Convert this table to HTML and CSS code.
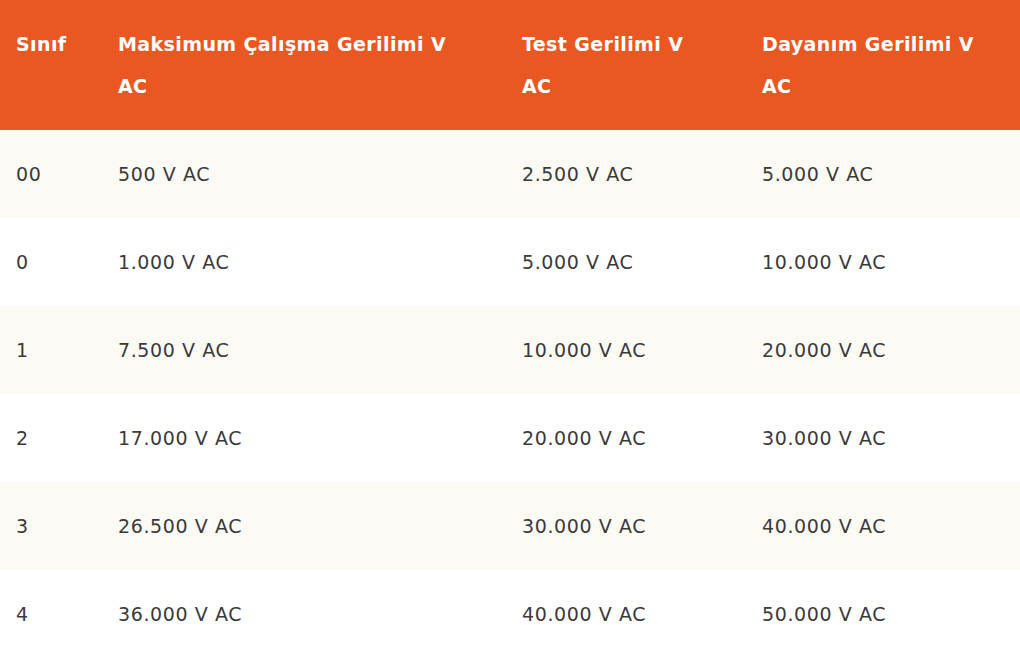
FILE: index.html
```html
<!DOCTYPE html>
<html lang="tr">
<head>
<meta charset="utf-8">
<title>Sınıf tablosu</title>
<link rel="stylesheet" href="styles.css">
</head>
<body>
<table class="volt-table">
  <colgroup>
    <col class="c1"><col class="c2"><col class="c3"><col class="c4">
  </colgroup>
  <thead>
    <tr>
      <th>Sınıf</th>
      <th>Maksimum Çalışma Gerilimi V AC</th>
      <th>Test Gerilimi V AC</th>
      <th>Dayanım Gerilimi V AC</th>
    </tr>
  </thead>
  <tbody>
    <tr><td>00</td><td>500 V AC</td><td>2.500 V AC</td><td>5.000 V AC</td></tr>
    <tr><td>0</td><td>1.000 V AC</td><td>5.000 V AC</td><td>10.000 V AC</td></tr>
    <tr><td>1</td><td>7.500 V AC</td><td>10.000 V AC</td><td>20.000 V AC</td></tr>
    <tr><td>2</td><td>17.000 V AC</td><td>20.000 V AC</td><td>30.000 V AC</td></tr>
    <tr><td>3</td><td>26.500 V AC</td><td>30.000 V AC</td><td>40.000 V AC</td></tr>
    <tr><td>4</td><td>36.000 V AC</td><td>40.000 V AC</td><td>50.000 V AC</td></tr>
  </tbody>
</table>
</body>
</html>
```

FILE: styles.css
```css
html, body {
  margin: 0;
  padding: 0;
  background: #ffffff;
}

body {
  font-family: "DejaVu Sans", "Noto Sans", sans-serif;
  color: #3a3a3a;
}

.volt-table {
  width: 1020px;
  border-collapse: collapse;
  table-layout: fixed;
}

.c1 { width: 102px; }
.c2 { width: 404px; }
.c3 { width: 240px; }
.c4 { width: 274px; }

.volt-table th,
.volt-table td {
  padding: 23px 16px;
  line-height: 42px;
  font-size: 19px;
  text-align: left;
  vertical-align: top;
}

.volt-table thead tr {
  background: #e95822;
}

.volt-table th {
  padding-right: 38px;
  color: #ffffff;
  font-weight: 700;
  letter-spacing: 0.4px;
}

.volt-table tbody tr:nth-child(odd) {
  background: #fbfaf5;
}

.volt-table td {
  font-weight: 400;
  letter-spacing: 0.6px;
}
```
